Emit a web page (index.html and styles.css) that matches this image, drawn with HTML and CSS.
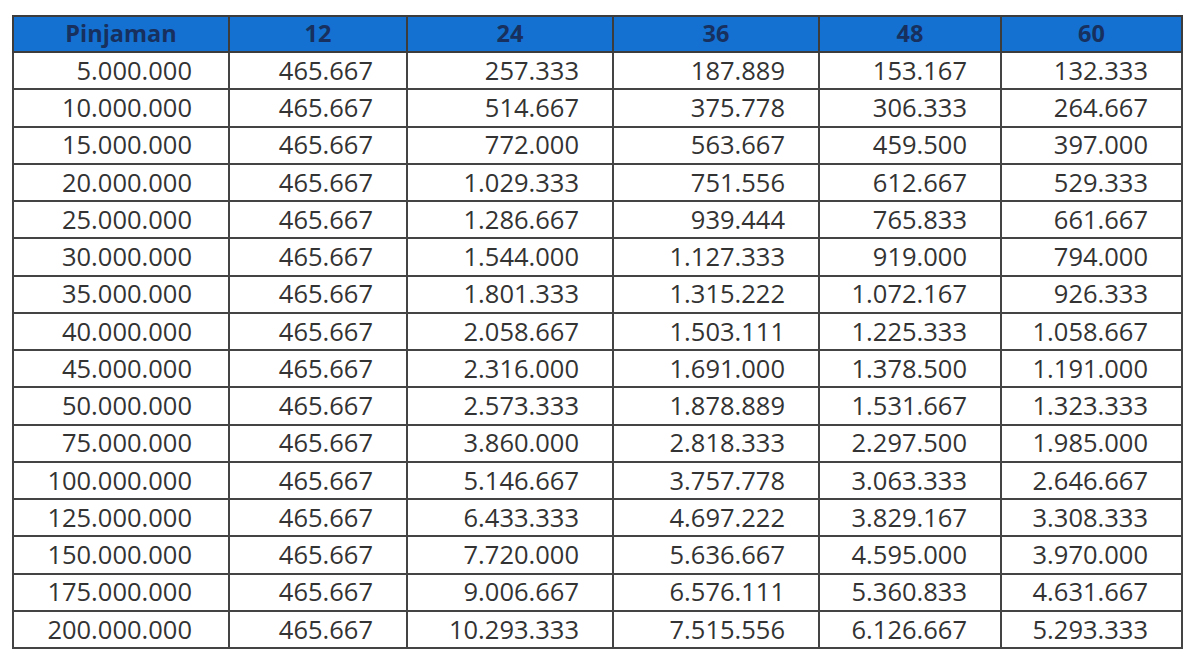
FILE: index.html
```html
<!DOCTYPE html>
<html lang="id">
<head>
<meta charset="utf-8">
<title>Tabel Angsuran</title>
<link rel="stylesheet" href="styles.css">
</head>
<body>
<table class="grid">
  <colgroup>
    <col class="c0"><col class="c1"><col class="c2"><col class="c3"><col class="c4"><col class="c5">
  </colgroup>
  <thead>
    <tr><th>Pinjaman</th><th>12</th><th>24</th><th>36</th><th>48</th><th>60</th></tr>
  </thead>
  <tbody>
    <tr><td>5.000.000</td><td>465.667</td><td>257.333</td><td>187.889</td><td>153.167</td><td>132.333</td></tr>
    <tr><td>10.000.000</td><td>465.667</td><td>514.667</td><td>375.778</td><td>306.333</td><td>264.667</td></tr>
    <tr><td>15.000.000</td><td>465.667</td><td>772.000</td><td>563.667</td><td>459.500</td><td>397.000</td></tr>
    <tr><td>20.000.000</td><td>465.667</td><td>1.029.333</td><td>751.556</td><td>612.667</td><td>529.333</td></tr>
    <tr><td>25.000.000</td><td>465.667</td><td>1.286.667</td><td>939.444</td><td>765.833</td><td>661.667</td></tr>
    <tr><td>30.000.000</td><td>465.667</td><td>1.544.000</td><td>1.127.333</td><td>919.000</td><td>794.000</td></tr>
    <tr><td>35.000.000</td><td>465.667</td><td>1.801.333</td><td>1.315.222</td><td>1.072.167</td><td>926.333</td></tr>
    <tr><td>40.000.000</td><td>465.667</td><td>2.058.667</td><td>1.503.111</td><td>1.225.333</td><td>1.058.667</td></tr>
    <tr><td>45.000.000</td><td>465.667</td><td>2.316.000</td><td>1.691.000</td><td>1.378.500</td><td>1.191.000</td></tr>
    <tr><td>50.000.000</td><td>465.667</td><td>2.573.333</td><td>1.878.889</td><td>1.531.667</td><td>1.323.333</td></tr>
    <tr><td>75.000.000</td><td>465.667</td><td>3.860.000</td><td>2.818.333</td><td>2.297.500</td><td>1.985.000</td></tr>
    <tr><td>100.000.000</td><td>465.667</td><td>5.146.667</td><td>3.757.778</td><td>3.063.333</td><td>2.646.667</td></tr>
    <tr><td>125.000.000</td><td>465.667</td><td>6.433.333</td><td>4.697.222</td><td>3.829.167</td><td>3.308.333</td></tr>
    <tr><td>150.000.000</td><td>465.667</td><td>7.720.000</td><td>5.636.667</td><td>4.595.000</td><td>3.970.000</td></tr>
    <tr><td>175.000.000</td><td>465.667</td><td>9.006.667</td><td>6.576.111</td><td>5.360.833</td><td>4.631.667</td></tr>
    <tr><td>200.000.000</td><td>465.667</td><td>10.293.333</td><td>7.515.556</td><td>6.126.667</td><td>5.293.333</td></tr>
  </tbody>
</table>
</body>
</html>
```

FILE: styles.css
```css
html, body {
  margin: 0;
  padding: 0;
  background: #ffffff;
}

body {
  padding: 15px 0 0 12px;
  font-family: "Open Sans", "Liberation Sans", sans-serif;
}

.grid {
  border-collapse: collapse;
  table-layout: fixed;
  width: 1169px;
  border: 2px solid #3c3c3c;
}

.c0 { width: 216px; }
.c1 { width: 178px; }
.c2 { width: 206px; }
.c3 { width: 206px; }
.c4 { width: 182px; }
.c5 { width: 181px; }

.grid th {
  background: #1471d1;
  color: #17305e;
  font-weight: 700;
  font-size: 23.5px;
  height: 34px;
  padding: 0;
  text-align: center;
  border: 2px solid #3c3c3c;
  line-height: 1;
}

.grid td {
  color: #333333;
  font-size: 25.5px;
  height: 35.25px;
  padding: 0 33px 0 0;
  text-align: right;
  border: 2px solid #444444;
  line-height: 1;
}

.grid td:first-child {
  padding-right: 36px;
}
```
